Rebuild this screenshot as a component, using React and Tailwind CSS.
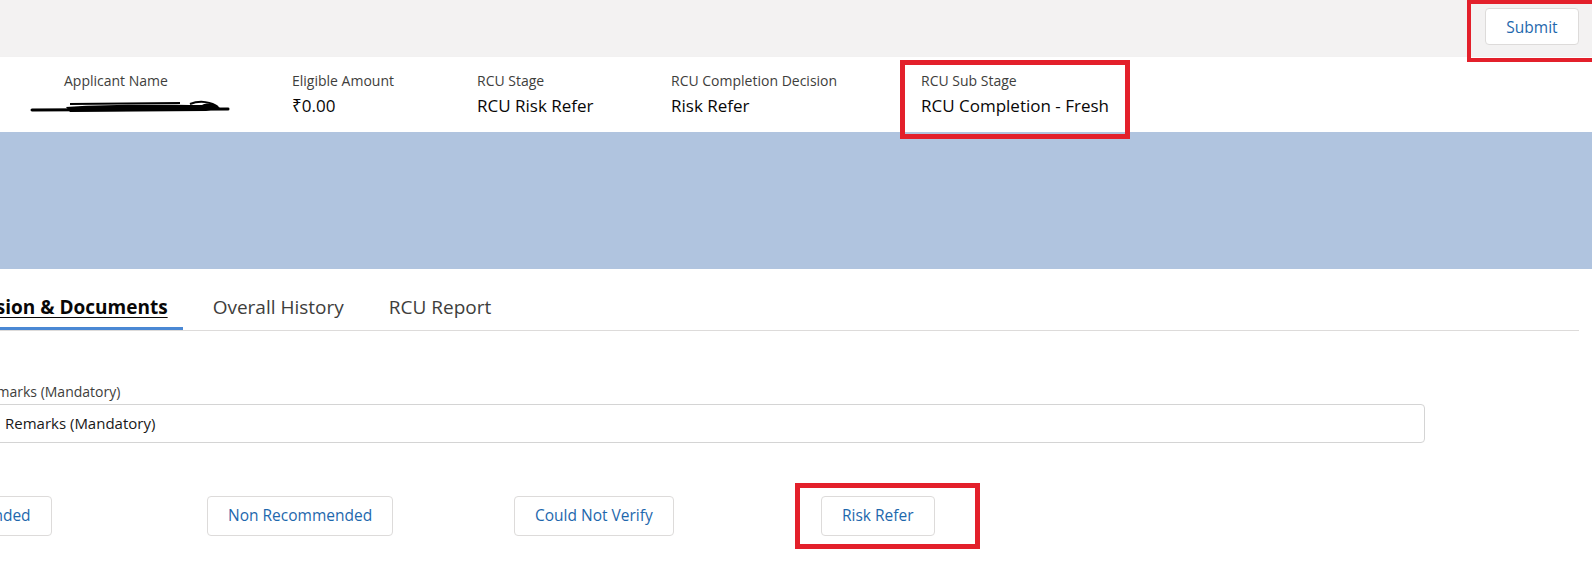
import React from "react"

const font = { fontFamily: '"Open Sans", "Noto Sans", sans-serif' }

function Field({ label, value, width, children }) {
  return (
    <div className={`${width} shrink-0`}>
      <div className="text-[14px] leading-[18px] text-[#3e3e3c]">{label}</div>
      {children || <div className="text-[17px] leading-[24px] text-[#080707] mt-[4px]">{value}</div>}
    </div>
  )
}

function Redacted() {
  return (
    <svg width="200" height="20" viewBox="0 0 200 20" className="ml-[-34px] mt-[6px]">
      <path d="M2 14 L198 13" stroke="#000" strokeWidth="3" strokeLinecap="round" />
      <path d="M36 11 C80 8 130 9 172 9 C178 6 186 8 190 12 L176 15 L40 16 Z" fill="#000" />
      <path d="M40 8 L150 7" stroke="#000" strokeWidth="2" />
      <path d="M160 8 C170 4 182 6 188 11" stroke="#000" strokeWidth="2" fill="none" />
    </svg>
  )
}

function DecisionButton({ label }) {
  return (
    <div className="w-[307px] shrink-0">
      <button className="h-[40px] px-[20px] bg-white border border-[#dddbda] rounded-[4px] text-[15.5px] text-[#1e68ad]">
        {label}
      </button>
    </div>
  )
}

export default function App() {
  return (
    <div className="relative w-[1592px] h-[561px] bg-white overflow-hidden" style={font}>
      {/* top action bar */}
      <div className="h-[57px] bg-[#f3f2f2] flex justify-end pt-[8px] pr-[13px]">
        <button className="w-[94px] h-[37px] pt-[2px] bg-white border border-[#dddbda] rounded-[4px] text-[15.5px] text-[#1e68ad]">
          Submit
        </button>
      </div>

      {/* highlights header */}
      <div className="h-[75px] bg-white flex pl-[64px] pt-[15px] shadow-[0_1px_2px_rgba(0,0,0,0.1)]">
        <Field label="Applicant Name" width="w-[228px]">
          <Redacted />
        </Field>
        <Field label="Eligible Amount" value="₹0.00" width="w-[185px]" />
        <Field label="RCU Stage" value="RCU Risk Refer" width="w-[194px]" />
        <Field label="RCU Completion Decision" value="Risk Refer" width="w-[250px]" />
        <Field label="RCU Sub Stage" value="RCU Completion - Fresh" width="w-[250px]" />
      </div>

      <div className="h-[137px] bg-[#b0c4df]" />

      {/* tabs */}
      <div className="mr-[13px] mt-[23px] border-b border-[#dddbda] flex">
        <div className="ml-[-60px] flex">
          <div className="px-[15px] pb-[5px] border-b-[3px] border-[#4a88d4] text-[19px] leading-[30px] font-bold text-[#080707] underline underline-offset-[3px]">
            Decision &amp; Documents
          </div>
          <div className="ml-[15px] px-[15px] pb-[5px] text-[19px] leading-[30px] text-[#3e3e3c]">Overall History</div>
          <div className="ml-[15px] px-[15px] pb-[5px] text-[19px] leading-[30px] text-[#3e3e3c]">RCU Report</div>
        </div>
      </div>

      {/* remarks */}
      <div className="mt-[52px] w-[1425px]">
        <div className="ml-[-20px] text-[14px] leading-[18px] text-[#3e3e3c]">Remarks (Mandatory)</div>
        <div className="mt-[3px] ml-[-12px] h-[39px] border border-[#d4d4d4] rounded-[4px] flex items-center pl-[16px]">
          <span className="text-[15px] text-[#181818]">Remarks (Mandatory)</span>
        </div>
      </div>

      {/* decisions */}
      <div className="mt-[53px] ml-[-100px] flex">
        <DecisionButton label="Recommended" />
        <DecisionButton label="Non Recommended" />
        <DecisionButton label="Could Not Verify" />
        <DecisionButton label="Risk Refer" />
      </div>

      {/* annotation boxes */}
      <div className="absolute left-[1467px] top-0 w-[130px] h-[62px] border-[4px] border-[#e3202b]" />
      <div className="absolute left-[900px] top-[60px] w-[230px] h-[79px] border-[5px] border-[#e3202b]" />
      <div className="absolute left-[795px] top-[483px] w-[185px] h-[66px] border-[5px] border-[#e3202b]" />
    </div>
  )
}
